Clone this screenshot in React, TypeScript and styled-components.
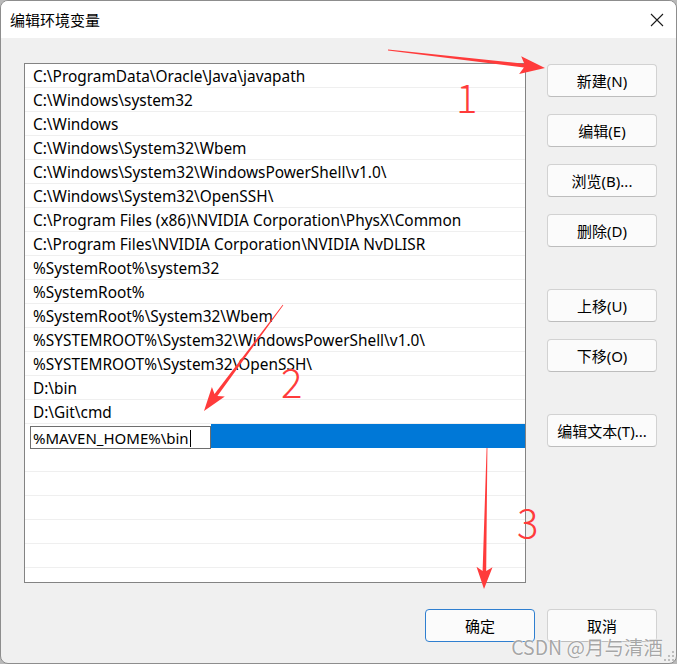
import React from "react";
import styled, { createGlobalStyle } from "styled-components";

const GlobalStyle = createGlobalStyle`
  html, body { margin: 0; padding: 0; background: #b9b9b9; }
  #root { width: 677px; height: 664px; }
`;

const UI_FONT = `"Noto Sans", "Noto Sans CJK SC", sans-serif`;

const Window = styled.div`
  position: relative;
  width: 677px;
  height: 664px;
  box-sizing: border-box;
  border: 1px solid #8d8d8d;
  border-radius: 8px;
  overflow: hidden;
  display: flex;
  flex-direction: column;
  background: #f0f0f0;
  font-family: ${UI_FONT};
  color: #000;
`;

const TitleBar = styled.div`
  height: 37px;
  flex: none;
  background: #ffffff;
  display: flex;
  align-items: center;
  justify-content: space-between;
  padding: 0 12px 0 9px;
`;

const Title = styled.span`
  font-family: "Noto Sans CJK SC", sans-serif;
  font-size: 15px;
  margin-top: -1px;
`;

const CloseIcon = styled.svg`
  width: 14px;
  height: 14px;
  display: block;
`;

const Body = styled.div`
  flex: 1;
  display: flex;
  flex-direction: column;
  padding: 25px 19px 21px 23px;
`;

const Content = styled.div`
  display: grid;
  grid-template-columns: 502px 110px;
  column-gap: 21px;
  align-items: start;
`;

const List = styled.div`
  height: 520px;
  box-sizing: border-box;
  border: 1px solid #838383;
  background: #fff;
  overflow: hidden;
`;

const Row = styled.div`
  height: 24px;
  box-sizing: border-box;
  border-bottom: 1px solid #efefef;
  display: flex;
  align-items: center;
  padding: 2px 0 0 8px;
  font-size: 15.4px;
  white-space: nowrap;
`;

const SelectedRow = styled.div`
  height: 24px;
  display: flex;
  align-items: stretch;
  padding-left: 5px;
`;

const Highlight = styled.div`
  flex: 1;
  background: #0078d7;
`;

const EditBox = styled.div`
  height: 23px;
  width: 181px;
  box-sizing: border-box;
  margin-top: 2px;
  margin-bottom: -1px;
  border: 1px solid #6e6e6e;
  background: #fff;
  display: flex;
  align-items: center;
  padding: 1px 0 0 2px;
  font-size: 15px;
  white-space: nowrap;
`;

const Caret = styled.span`
  display: inline-block;
  width: 1px;
  height: 17px;
  background: #000;
  margin-left: 1px;
`;

const ButtonColumn = styled.div`
  display: flex;
  flex-direction: column;
  padding-top: 1px;
`;

const Button = styled.button<{ $gap?: number; $primary?: boolean }>`
  width: 110px;
  height: 33px;
  box-sizing: border-box;
  margin-top: ${(p) => p.$gap ?? 0}px;
  border: 1px solid ${(p) => (p.$primary ? "#2f7fd0" : "#d2d2d2")};
  border-bottom-color: ${(p) => (p.$primary ? "#2f7fd0" : "#bdbdbd")};
  border-radius: 4px;
  background: #fbfbfb;
  font-family: ${UI_FONT};
  font-size: 15px;
  color: #000;
  padding: 0;
  display: flex;
  align-items: center;
  justify-content: center;
`;

const Footer = styled.div`
  display: flex;
  justify-content: flex-end;
  gap: 12px;
  margin-top: 26px;
`;

const Overlay = styled.svg`
  position: absolute;
  left: -1px;
  top: -1px;
  width: 677px;
  height: 664px;
  pointer-events: none;
`;

const Mark = styled.span<{ $x: number; $y: number }>`
  position: absolute;
  left: ${(p) => p.$x}px;
  top: ${(p) => p.$y}px;
  font-family: "Noto Sans CJK SC", "Noto Sans", sans-serif;
  font-weight: 300;
  font-size: 40px;
  line-height: 1;
  color: #ff3b3b;
  pointer-events: none;
`;

const Watermark = styled.span`
  position: absolute;
  right: 13px;
  bottom: 2px;
  font-family: "Noto Sans CJK SC", sans-serif;
  font-size: 19.5px;
  color: rgba(150, 150, 150, 0.85);
  text-shadow: 0 0 1px #fff, 0 0 2px #fff;
  pointer-events: none;
`;

const Grip = styled.svg`
  position: absolute;
  right: 1px;
  bottom: 1px;
  width: 11px;
  height: 11px;
`;

const paths = [
  "C:\\ProgramData\\Oracle\\Java\\javapath",
  "C:\\Windows\\system32",
  "C:\\Windows",
  "C:\\Windows\\System32\\Wbem",
  "C:\\Windows\\System32\\WindowsPowerShell\\v1.0\\",
  "C:\\Windows\\System32\\OpenSSH\\",
  "C:\\Program Files (x86)\\NVIDIA Corporation\\PhysX\\Common",
  "C:\\Program Files\\NVIDIA Corporation\\NVIDIA NvDLISR",
  "%SystemRoot%\\system32",
  "%SystemRoot%",
  "%SystemRoot%\\System32\\Wbem",
  "%SYSTEMROOT%\\System32\\WindowsPowerShell\\v1.0\\",
  "%SYSTEMROOT%\\System32\\OpenSSH\\",
  "D:\\bin",
  "D:\\Git\\cmd",
];

function arrowPoints(
  tx: number,
  ty: number,
  hx: number,
  hy: number,
  headLen: number,
  headHalf: number
): string {
  const dx = hx - tx;
  const dy = hy - ty;
  const len = Math.hypot(dx, dy);
  const ux = dx / len;
  const uy = dy / len;
  const px = -uy;
  const py = ux;
  const bx = hx - ux * headLen;
  const by = hy - uy * headLen;
  const bx2 = hx - ux * (headLen - 4);
  const by2 = hy - uy * (headLen - 4);
  const t0 = 0.4;
  const t1 = 1.8;
  const pts: [number, number][] = [
    [tx + px * t0, ty + py * t0],
    [bx2 + px * t1, by2 + py * t1],
    [bx + px * headHalf, by + py * headHalf],
    [hx, hy],
    [bx - px * headHalf, by - py * headHalf],
    [bx2 - px * t1, by2 - py * t1],
    [tx - px * t0, ty - py * t0],
  ];
  return pts.map(([x, y]) => `${x.toFixed(1)},${y.toFixed(1)}`).join(" ");
}

export default function App() {
  const emptyRows = [0, 1, 2, 3, 4, 5];
  return (
    <>
      <GlobalStyle />
      <Window>
        <TitleBar>
          <Title>编辑环境变量</Title>
          <CloseIcon viewBox="0 0 14 14">
            <path d="M1 1 L13 13 M13 1 L1 13" stroke="#1b1b1b" strokeWidth="1.1" fill="none" />
          </CloseIcon>
        </TitleBar>
        <Body>
          <Content>
            <List>
              {paths.map((p) => (
                <Row key={p}>{p}</Row>
              ))}
              <SelectedRow>
                <EditBox>
                  %MAVEN_HOME%\bin
                  <Caret />
                </EditBox>
                <Highlight />
              </SelectedRow>
              {emptyRows.map((i) => (
                <Row key={`e${i}`} />
              ))}
            </List>
            <ButtonColumn>
              <Button>新建(N)</Button>
              <Button $gap={17}>编辑(E)</Button>
              <Button $gap={17}>浏览(B)...</Button>
              <Button $gap={17}>删除(D)</Button>
              <Button $gap={42}>上移(U)</Button>
              <Button $gap={17}>下移(O)</Button>
              <Button $gap={42}>编辑文本(T)...</Button>
            </ButtonColumn>
          </Content>
          <Footer>
            <Button $primary>确定</Button>
            <Button>取消</Button>
          </Footer>
        </Body>
        <Overlay viewBox="0 0 677 664">
          <polygon points={arrowPoints(388, 50, 545, 68, 25, 9)} fill="#ff3b3b" />
          <polygon points={arrowPoints(283, 305, 204, 411, 24, 8)} fill="#ff3b3b" />
          <polygon points={arrowPoints(487, 448, 484, 589, 22, 8)} fill="#ff3b3b" />
        </Overlay>
        <Mark $x={455} $y={75}>1</Mark>
        <Mark $x={280} $y={360}>2</Mark>
        <Mark $x={516} $y={500}>3</Mark>
        <Watermark>CSDN @月与清酒</Watermark>
        <Grip viewBox="0 0 11 11">
          <rect x="8" y="0" width="2" height="2" fill="#bdbdbd" />
          <rect x="4" y="4" width="2" height="2" fill="#bdbdbd" />
          <rect x="8" y="4" width="2" height="2" fill="#bdbdbd" />
          <rect x="0" y="8" width="2" height="2" fill="#bdbdbd" />
          <rect x="4" y="8" width="2" height="2" fill="#bdbdbd" />
          <rect x="8" y="8" width="2" height="2" fill="#bdbdbd" />
        </Grip>
      </Window>
    </>
  );
}
